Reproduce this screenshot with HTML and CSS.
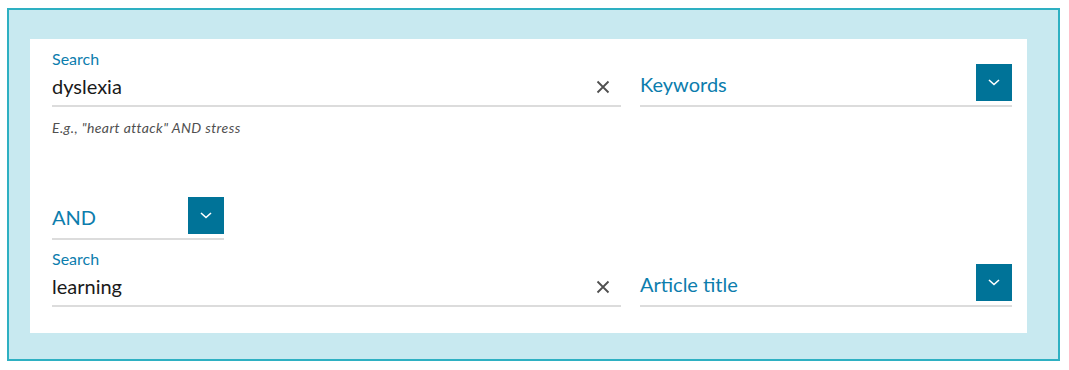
FILE: index.html
```html
<!DOCTYPE html>
<html lang="en">
<head>
    <meta charset="UTF-8">
    <meta name="viewport" content="width=device-width, initial-scale=1.0">
    <title>Advanced Search</title>
    <link rel="stylesheet" href="styles.css">
</head>
<body>
    <div class="frame">
        <div class="panel">
            <div class="search-row">
                <div class="field">
                    <label class="field-label" for="term1">Search</label>
                    <div class="input-line">
                        <input type="text" id="term1" value="dyslexia">
                        <button class="clear" aria-label="Clear">
                            <svg width="14" height="14" viewBox="0 0 14 14"><path d="M1.5 1.5 L12.5 12.5 M12.5 1.5 L1.5 12.5" stroke="#505050" stroke-width="1.8" fill="none"/></svg>
                        </button>
                    </div>
                </div>
                <div class="select">
                    <span class="select-value">Keywords</span>
                    <button class="select-btn" aria-label="Open">
                        <svg width="12" height="7" viewBox="0 0 12 7"><path d="M1 1 L6 5.5 L11 1" stroke="#fff" stroke-width="1.6" fill="none"/></svg>
                    </button>
                </div>
            </div>
            <p class="hint">E.g., "heart attack" AND stress</p>

            <div class="select operator">
                <span class="select-value">AND</span>
                <button class="select-btn" aria-label="Open">
                    <svg width="12" height="7" viewBox="0 0 12 7"><path d="M1 1 L6 5.5 L11 1" stroke="#fff" stroke-width="1.6" fill="none"/></svg>
                </button>
            </div>

            <div class="search-row second">
                <div class="field">
                    <label class="field-label" for="term2">Search</label>
                    <div class="input-line">
                        <input type="text" id="term2" value="learning">
                        <button class="clear" aria-label="Clear">
                            <svg width="14" height="14" viewBox="0 0 14 14"><path d="M1.5 1.5 L12.5 12.5 M12.5 1.5 L1.5 12.5" stroke="#505050" stroke-width="1.8" fill="none"/></svg>
                        </button>
                    </div>
                </div>
                <div class="select">
                    <span class="select-value">Article title</span>
                    <button class="select-btn" aria-label="Open">
                        <svg width="12" height="7" viewBox="0 0 12 7"><path d="M1 1 L6 5.5 L11 1" stroke="#fff" stroke-width="1.6" fill="none"/></svg>
                    </button>
                </div>
            </div>
        </div>
    </div>
</body>
</html>
```

FILE: styles.css
```css
body {
    margin: 8px 9px 0 7px;
    font-family: Lato, "Open Sans", sans-serif;
}

.frame {
    border: 2px solid #2eb0c2;
    background-color: #c8e9f0;
    padding: 29px 31px 26px 21px;
}

.panel {
    background-color: #fff;
    padding: 11px 15px 26px 22px;
}

.search-row {
    display: grid;
    grid-template-columns: 569px 1fr;
    gap: 19px;
    align-items: end;
}

.second {
    margin-top: 10px;
}

.field {
    display: flex;
    flex-direction: column;
}

.field-label {
    font-size: 16px;
    line-height: 18px;
    color: #0c7dad;
}

.input-line {
    display: flex;
    align-items: center;
    height: 35px;
    padding-bottom: 2px;
    padding-right: 11px;
    border-bottom: 2px solid #dcdcdc;
}

.input-line input {
    flex: 1;
    border: none;
    outline: none;
    padding: 0;
    background: none;
    font-family: Lato, "Open Sans", sans-serif;
    font-size: 20px;
    line-height: 24px;
    color: #1a1a1a;
}

.clear {
    display: flex;
    padding: 0;
    margin-top: 2px;
    border: none;
    background: none;
    cursor: pointer;
}

.select {
    display: flex;
    justify-content: space-between;
    align-items: flex-start;
    padding-bottom: 4px;
    border-bottom: 2px solid #dcdcdc;
}

.select-value {
    padding-top: 8px;
    font-size: 20px;
    line-height: 24px;
    color: #0c7dad;
}

.select-btn {
    display: flex;
    align-items: center;
    justify-content: center;
    width: 36px;
    height: 37px;
    padding: 0;
    border: none;
    background-color: #007398;
    cursor: pointer;
}

.hint {
    margin: 13px 0 0;
    font-size: 14px;
    line-height: 16px;
    letter-spacing: 0.4px;
    font-style: italic;
    color: #505050;
}

.operator {
    width: 172px;
    margin-top: 61px;
}
```
